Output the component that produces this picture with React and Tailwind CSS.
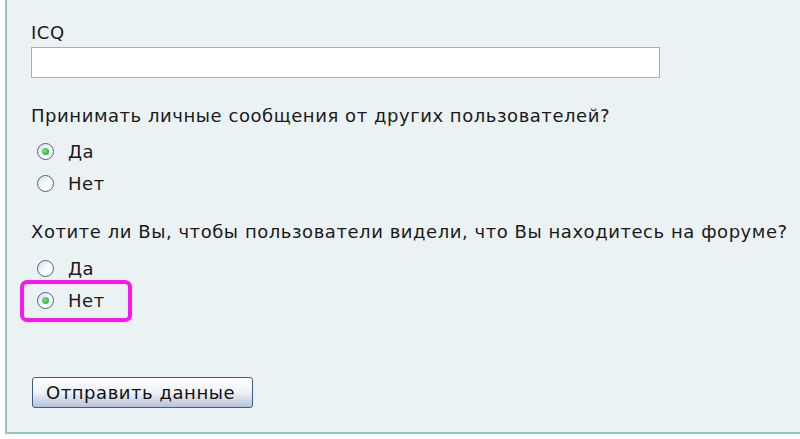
import React from "react";

function Radio({ checked }) {
    return (
        <span className="w-[17px] h-[17px] rounded-full border border-[#44658e] bg-gradient-to-br from-[#d6dbe2] via-[#fbfbfb] to-white flex items-center justify-center shrink-0">
            {checked && <span className="w-[7px] h-[7px] rounded-full bg-[radial-gradient(circle_at_40%_40%,#7be27f,#1d9f28)]" />}
        </span>
    );
}

function Option({ label, checked, marked }) {
    return (
        <div className="relative flex items-center gap-[14px] h-[32px]">
            <Radio checked={checked} />
            <span>{label}</span>
            {marked && (
                <span className="absolute -left-[17px] -top-[4px] w-[112px] h-[42px] border-[4px] border-[#ff14f0] rounded-[7px]" />
            )}
        </div>
    );
}

export default function App() {
    return (
        <div className="w-[800px] h-[439px] bg-white overflow-hidden" style={{ fontFamily: '"DejaVu Sans", Verdana, sans-serif' }}>
            <div className="ml-[5px] h-[434px] border-l-2 border-b-2 border-[#8fc6c4] bg-[#eaf2f4] text-[18px] tracking-[0.55px] text-[#1a1a1a] pl-[24px] pt-[21px]">
                <div className="leading-[24px]">ICQ</div>
                <div className="mt-[2px] w-[629px] h-[31px] bg-white border border-[#a9aeb2]" />

                <div className="mt-[26px] leading-[24px]">Принимать личные сообщения от других пользователей?</div>
                <div className="pl-[6px] mt-[7px]">
                    <Option label="Да" checked />
                    <Option label="Нет" />
                </div>

                <div className="mt-[21px] leading-[24px]">Хотите ли Вы, чтобы пользователи видели, что Вы находитесь на форуме?</div>
                <div className="pl-[6px] mt-[8px]">
                    <Option label="Да" />
                    <Option label="Нет" checked marked />
                </div>

                <button className="block mt-[61px] ml-[1px] w-[221px] h-[31px] rounded-[3px] border border-[#3d5d8c] bg-gradient-to-b from-white via-[#eef1f6] to-[#b6c3da] text-[18px] tracking-[0.55px] text-[#111] text-left pl-[13px] leading-none">
                    Отправить данные
                </button>
            </div>
        </div>
    );
}
